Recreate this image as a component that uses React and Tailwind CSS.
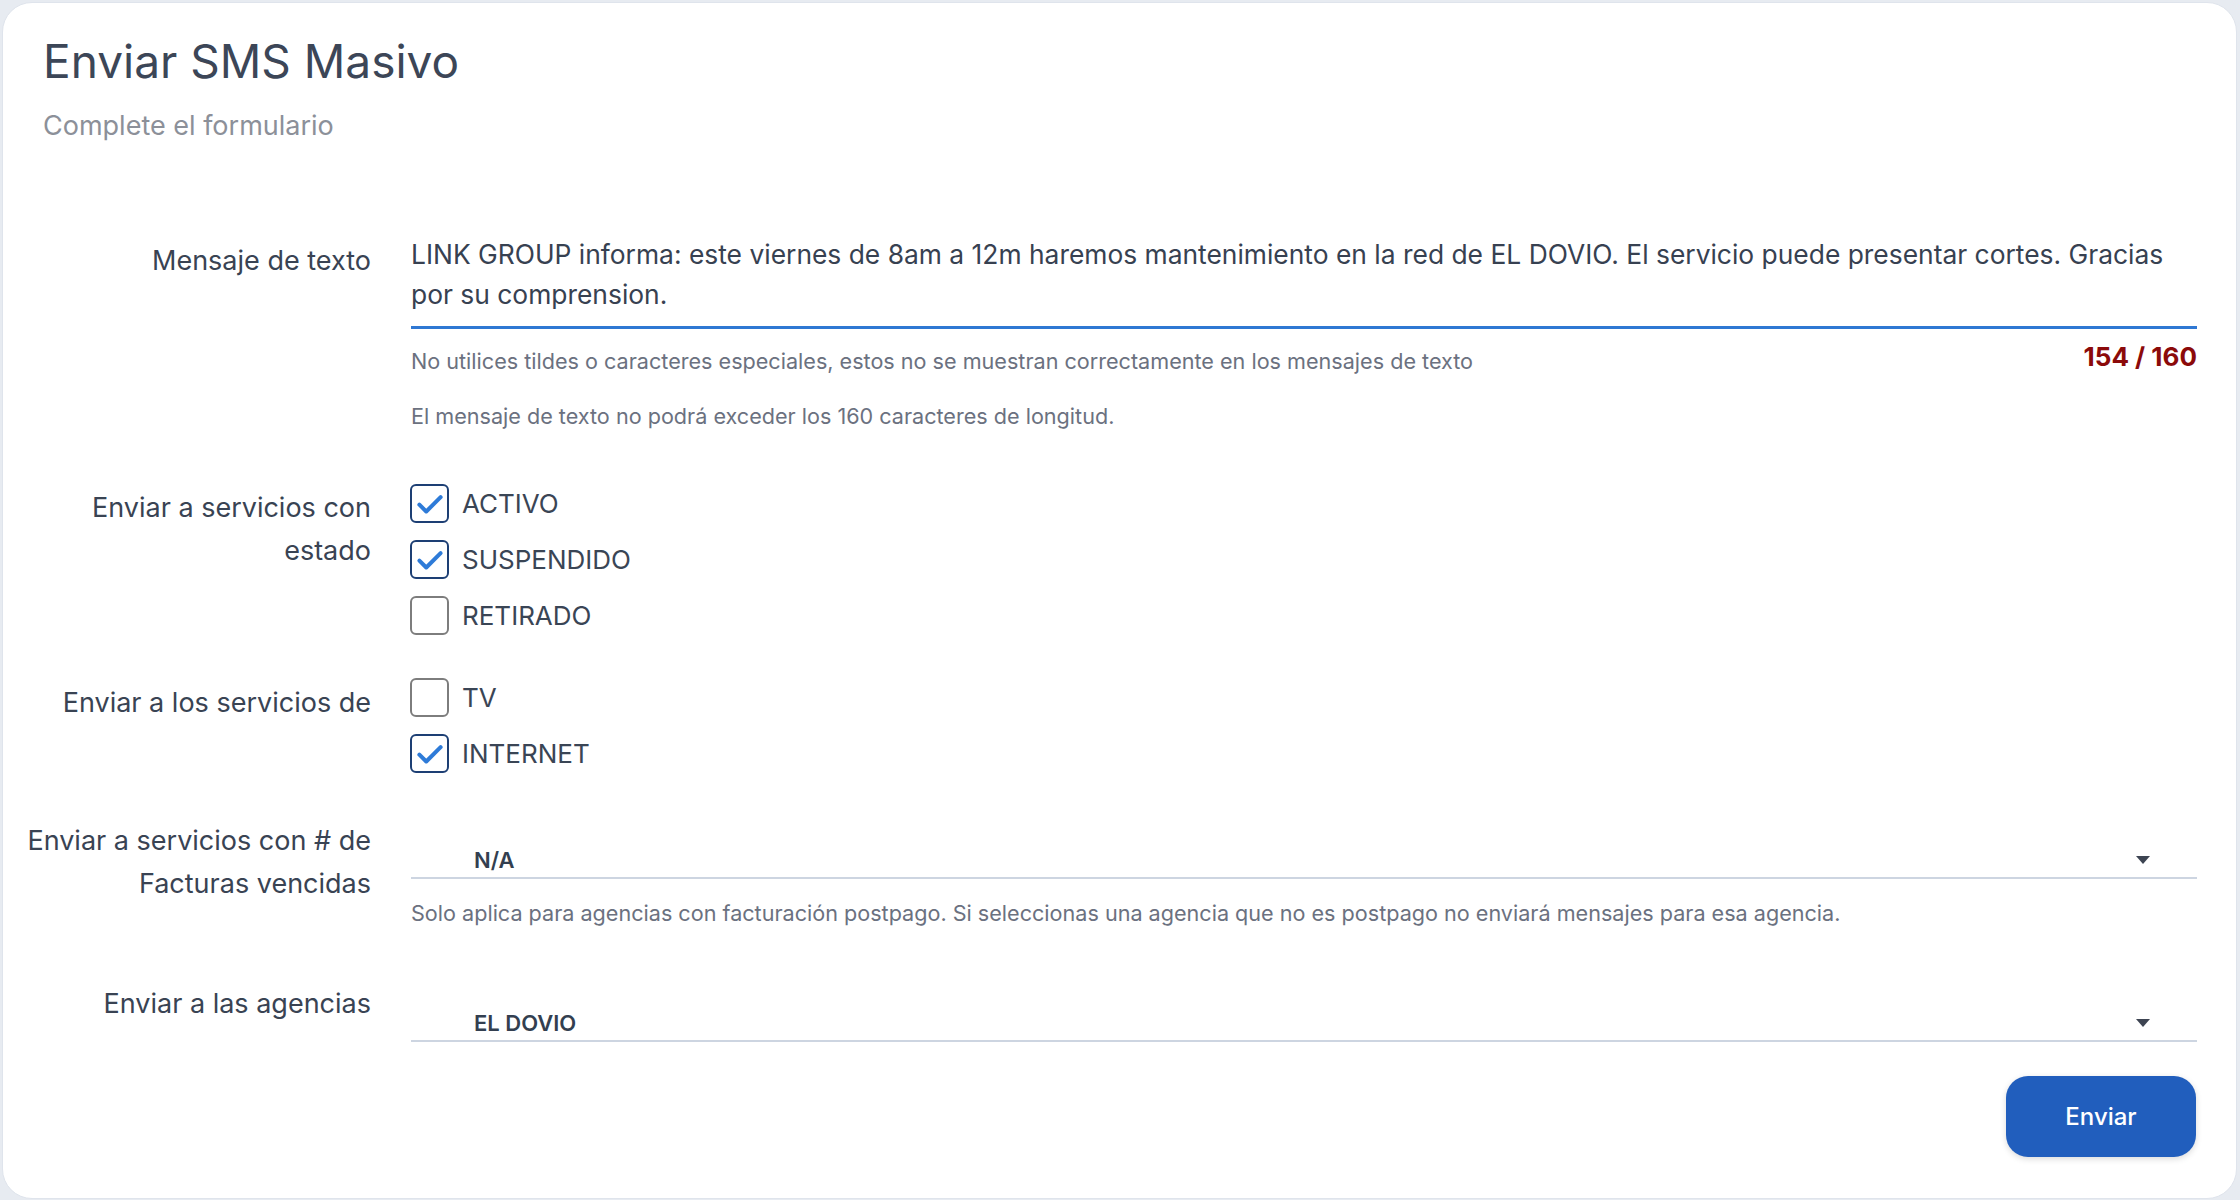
import React from "react";

const font = { fontFamily: "Inter, 'Noto Sans', sans-serif" };

function Check({ checked, label }) {
  return (
    <div className="flex items-center h-[39px]">
      <div
        className={
          "w-[39px] h-[39px] rounded-[6px] border-2 flex items-center justify-center " +
          (checked ? "border-[#1d3f74]" : "border-[#7d7d7d]")
        }
      >
        {checked && (
          <svg width="30" height="30" viewBox="0 0 24 24" fill="none">
            <path d="M3.5 12.5l5.5 5.5L20.5 6.5" stroke="#2e7bd8" strokeWidth="3.2" strokeLinecap="round" strokeLinejoin="round" />
          </svg>
        )}
      </div>
      <span className="ml-[13px] text-[26px] leading-[36px] text-[#3a4555]">{label}</span>
    </div>
  );
}

function Select({ value }) {
  return (
    <div className="h-[60px] border-b-2 border-[#cdd5e1] flex items-end justify-between pl-[63px] pr-[47px] pb-[3px]">
      <span className="text-[22px] leading-[28px] font-semibold text-[#333f50]">{value}</span>
      <svg width="14" height="8" viewBox="0 0 14 8" className="mb-[10px]">
        <path d="M0 0h14L7 8z" fill="#3d4452" />
      </svg>
    </div>
  );
}

const labelCls = "text-right text-[27px] leading-[43px] text-[#394353]";
const helpCls = "text-[21.6px] leading-[28px] text-[#6b7180]";

export default function App() {
  return (
    <div style={font} className="w-[2240px] h-[1200px] bg-[#e7ebf1] pt-[2px] pl-[2px] pr-[3px] pb-[1px]">
      <div className="h-full bg-white rounded-[30px] border border-[#dfe4ec] pt-[31px] pl-[40px] pr-[39px] flex flex-col">
        <h1 className="text-[46px] leading-[54px] text-[#3c4657] font-normal">Enviar SMS Masivo</h1>
        <p className="mt-[20px] text-[27px] leading-[36px] text-[#8c9099]">Complete el formulario</p>

        <div className="-ml-[32px] mt-[90px] grid grid-cols-[360px_1fr] gap-x-[40px]">
          {/* Mensaje */}
          <div className={"pt-[5px] " + labelCls}>Mensaje de texto</div>
          <div>
            <div className="text-[26.4px] leading-[40px] text-[#374151] pb-[12px] border-b-[3px] border-[#2f78d3]">
              LINK GROUP informa: este viernes de 8am a 12m haremos mantenimiento en la red de EL DOVIO. El servicio puede presentar cortes. Gracias por su comprension.
            </div>
            <div className="mt-[14px] flex justify-between items-center">
              <span className={helpCls}>
                No utilices tildes o caracteres especiales, estos no se muestran correctamente en los mensajes de texto
              </span>
              <span className="text-[26px] leading-[28px] font-bold text-[#8b0a0a] mb-[8px]">154 / 160</span>
            </div>
            <div className={"mt-[23px] " + helpCls}>
              El mensaje de texto no podrá exceder los 160 caracteres de longitud.
            </div>
          </div>

          {/* Estado */}
          <div className={"mt-[54px] pt-[2px] " + labelCls}>
            Enviar a servicios con
            <br />
            estado
          </div>
          <div className="mt-[54px] flex flex-col gap-[17px] -ml-[1px]">
            <Check checked label="ACTIVO" />
            <Check checked label="SUSPENDIDO" />
            <Check label="RETIRADO" />
          </div>

          {/* Servicios */}
          <div className={"mt-[43px] pt-[3px] " + labelCls}>Enviar a los servicios de</div>
          <div className="mt-[43px] flex flex-col gap-[17px] -ml-[1px]">
            <Check label="TV" />
            <Check checked label="INTERNET" />
          </div>

          {/* Facturas */}
          <div className={"mt-[46px] " + labelCls}>
            Enviar a servicios con # de
            <br />
            Facturas vencidas
          </div>
          <div className="mt-[46px]">
            <Select value="N/A" />
            <div className={"mt-[20px] " + helpCls}>
              Solo aplica para agencias con facturación postpago. Si seleccionas una agencia que no es postpago no enviará mensajes para esa agencia.
            </div>
          </div>

          {/* Agencias */}
          <div className={"mt-[55px] " + labelCls}>Enviar a las agencias</div>
          <div className="mt-[55px]">
            <Select value="EL DOVIO" />
            <div className="mt-[34px] flex justify-end pr-[1px]">
              <button className="w-[190px] h-[81px] rounded-[22px] bg-[#215ebd] text-white text-[24px] font-medium shadow-[0_2px_6px_rgba(0,0,0,0.15)]">
                Enviar
              </button>
            </div>
          </div>
        </div>
      </div>
    </div>
  );
}
